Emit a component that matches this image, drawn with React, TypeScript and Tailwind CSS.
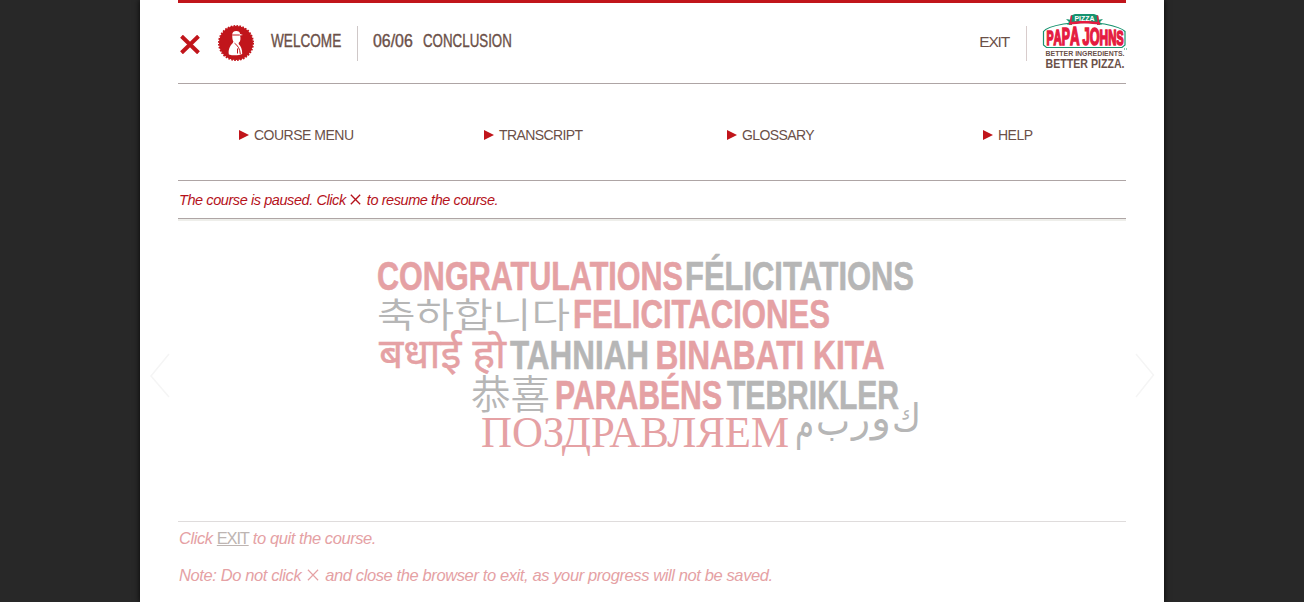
import type { ReactNode } from "react";

type Word = {
  text: string;
  x: number;
  y: number;
  width: number;
  size: number;
  fill: string;
  font: string;
  weight?: number;
  stroke?: number;
};

const PINK = "#e5a1a4";
const GREY = "#b6b6b6";
const SANS = "'Liberation Sans', sans-serif";

const words: Word[] = [
  { text: "CONGRATULATIONS", x: 377, y: 289.5, width: 306, size: 40.5, fill: PINK, font: SANS, weight: 700, stroke: 0.6 },
  { text: "FÉLICITATIONS", x: 685, y: 289.5, width: 229, size: 40.5, fill: GREY, font: SANS, weight: 700, stroke: 0.6 },
  { text: "축하합니다", x: 377, y: 328, width: 193, size: 35.5, fill: GREY, font: "'Noto Sans CJK KR', sans-serif", weight: 350 },
  { text: "FELICITACIONES", x: 573, y: 327.5, width: 257, size: 40.5, fill: PINK, font: SANS, weight: 700, stroke: 0.6 },
  { text: "बधाई हो", x: 379, y: 367.5, width: 127, size: 41, fill: PINK, font: "'Noto Sans', 'Noto Sans Devanagari', sans-serif", stroke: 0.4 },
  { text: "TAHNIAH", x: 510, y: 369, width: 139, size: 40.5, fill: GREY, font: SANS, weight: 700, stroke: 0.6 },
  { text: "BINABATI KITA", x: 655.5, y: 369, width: 229, size: 40.5, fill: PINK, font: SANS, weight: 700, stroke: 0.6 },
  { text: "恭喜", x: 471, y: 409, width: 79, size: 40, fill: GREY, font: "'Noto Sans CJK SC', sans-serif", weight: 350 },
  { text: "PARABÉNS", x: 555, y: 409, width: 167, size: 40.5, fill: PINK, font: SANS, weight: 700, stroke: 0.6 },
  { text: "TEBRIKLER", x: 727, y: 409, width: 172, size: 40.5, fill: GREY, font: SANS, weight: 700, stroke: 0.6 },
  { text: "ПОЗДРАВЛЯЕМ", x: 481, y: 447, width: 308, size: 43.5, fill: PINK, font: "'Liberation Serif', serif" },
];

const letters = [
  { text: "م", x: 795, y: 439, size: 46, width: 19 },
  { text: "ب", x: 816, y: 435, size: 40, width: 34 },
  { text: "ر", x: 852, y: 432, size: 38, width: 18 },
  { text: "و", x: 871, y: 431, size: 39, width: 20 },
  { text: "ك", x: 892, y: 431, size: 38, width: 29 },
];

function WordCloud() {
  return (
    <svg className="ml-[192px] mt-[26px] block h-[215px] w-[560px] shrink-0 overflow-visible" viewBox="370 245 560 215">
      {words.map((w) => (
        <text
          key={w.text}
          x={w.x}
          y={w.y}
          textLength={w.width}
          lengthAdjust="spacingAndGlyphs"
          fontSize={w.size}
          fontWeight={w.weight ?? 400}
          fontFamily={w.font}
          fill={w.fill}
          stroke={w.fill}
          strokeWidth={w.stroke ?? 0}
        >
          {w.text}
        </text>
      ))}
      {letters.map((l) => (
        <text
          key={l.text}
          x={l.x}
          y={l.y}
          textLength={l.width}
          lengthAdjust="spacingAndGlyphs"
          fontSize={l.size}
          fontFamily="'DejaVu Sans', sans-serif"
          fill={GREY}
        >
          {l.text}
        </text>
      ))}
    </svg>
  );
}

function Cross({ className, width }: { className: string; width: number }) {
  return (
    <svg className={className} viewBox="0 0 20 18" preserveAspectRatio="none" stroke="currentColor" strokeWidth={width} fill="none">
      <path d="M1.5 1.2 18.5 16.8M18.5 1.2 1.5 16.8" />
    </svg>
  );
}

function Badge() {
  return (
    <svg className="ml-[18px] size-9 shrink-0" viewBox="0 0 36 36">
      <circle cx="18" cy="18" r="17" fill="#c1151b" />
      <circle cx="18" cy="18" r="17.2" fill="none" stroke="#c1151b" strokeWidth="1.6" strokeDasharray="1.7 1.3" />
      <path
        d="M14.3 10C14 7.500 15.700 6 18.300 6c2.500 0 3.700 1.300 3.800 3l2.900.900-3 .500c.9 2.800.5 5.800-1.100 7.200l-.3 1.400c2.200 1.900 3.800 5.200 3.600 10-2.500 1.200-8.500 2-13.300.500-.9-3.500.600-8.800 3.900-11.500l.6-1.500c-1-1.400-1.200-4-1.100-6.500Z"
        fill="#fff"
      />
      <path d="M14.300 10h7.500M16.500 18.200c3.500 2.300 5.500 6 5.800 11M19.500 23.500v5" stroke="#c1151b" strokeWidth="1" fill="none" />
    </svg>
  );
}

function Logo() {
  return (
    <svg className="ml-[14px] mt-[11px] h-[56px] w-[86px] shrink-0 self-start overflow-visible" viewBox="1040 14 86 56">
      <path
        d="M1042.500 45V31.500c2-3 9-5.500 20-7.500 13-2 29-2 41 0 10 2 18 4.500 20.500 7.500V45l-3 2.500h-75.500z"
        fill="#fff"
        stroke="#17936f"
        strokeWidth="1.200"
      />
      <path d="m1065 19 6 1v5l-5-.500 2-2.500zM1102 19l-6 1v5l5-.500-2-2.500z" fill="#17936f" />
      <path d="m1070 15.500 4-1.500h19l4 1.500 1.500 8c-9-2-21-2-30 0z" fill="#17936f" />
      <path d="M1068 22.500c9-2 22-2 31 0v2.500c-9-2-22-2-31 0z" fill="#e51b40" />
      <path d="m1070.500 15.500-1 8M1096.500 15.500l1 8" stroke="#e51b40" strokeWidth="1.500" />
      <text x="1073.500" y="21" fontSize="6.800" fontFamily={SANS} fontWeight="700" textLength="20" lengthAdjust="spacingAndGlyphs" fill="#fff">
        PIZZA
      </text>
      <g fill="#e51b40" stroke="#e51b40" strokeWidth="1.700" fontFamily={SANS} fontWeight="700">
        <text x="1045.500" y="45.300" textLength="33" lengthAdjust="spacingAndGlyphs">
          <tspan fontSize="20">P</tspan>
          <tspan fontSize="21.500">A</tspan>
          <tspan fontSize="23">P</tspan>
          <tspan fontSize="25">A</tspan>
        </text>
        <text x="1081.500" y="45.300" textLength="41" lengthAdjust="spacingAndGlyphs">
          <tspan fontSize="24.500">J</tspan>
          <tspan fontSize="24">O</tspan>
          <tspan fontSize="22.500">H</tspan>
          <tspan fontSize="21.500">N</tspan>
          <tspan fontSize="20">S</tspan>
        </text>
      </g>
      <g fill="#6a5048" fontFamily={SANS} fontWeight="700">
        <text x="1044.500" y="55.800" fontSize="7.200" textLength="79" lengthAdjust="spacingAndGlyphs">BETTER INGREDIENTS.</text>
        <text x="1044.500" y="68" fontSize="12" textLength="79" lengthAdjust="spacingAndGlyphs">BETTER PIZZA.</text>
      </g>
      <path d="M1123 49h1M1125 49h1" stroke="#17936f" />
    </svg>
  );
}

function Condensed({ children, box, scale }: { children: ReactNode; box: string; scale: string }) {
  return (
    <span className={`mb-[5px] flex shrink-0 ${box}`}>
      <span className={`origin-left whitespace-nowrap text-[18.5px] text-[#6b5048] [-webkit-text-stroke:0.4px_#6b5048] ${scale}`}>{children}</span>
    </span>
  );
}

function MenuItem({ children, className }: { children: ReactNode; className: string }) {
  return (
    <a className={`flex items-center gap-[5px] whitespace-nowrap text-[14px] leading-4 text-[#6b5048] ${className}`}>
      <svg className="h-[10px] w-[10px]" viewBox="0 0 10 10">
        <path d="M0 0 10 5 0 10z" fill="#c1151b" />
      </svg>
      {children}
    </a>
  );
}

function Chevron({ flip, className }: { flip?: boolean; className: string }) {
  return (
    <svg className={`absolute top-[353px] h-[46px] w-5 ${className}`} viewBox="0 0 20 46" fill="none" stroke="#f5f5f5" strokeWidth="1.5">
      <path d={flip ? "M1 1 18.500 22 1 44" : "M19 1 1 23 19 44"} />
    </svg>
  );
}

export default function App() {
  return (
    <div className="flex h-[602px] w-[1304px] justify-center overflow-hidden bg-[#282828] font-['Liberation_Sans',sans-serif]">
      <main className="relative flex w-[1024px] flex-col bg-white px-[38px] shadow-[0_0_6px_rgba(0,0,0,0.9)]">
        <header className="flex h-[84px] shrink-0 items-center border-t-[3px] border-b border-t-[#c1151b] border-b-[#aea5a5]">
          <Cross className="ml-[2px] mt-[2px] h-[19px] w-5 text-[#c1151b]" width={4} />
          <Badge />
          <Condensed box="ml-[17px] w-[70px]" scale="scale-x-[0.735]">WELCOME</Condensed>
          <span className="ml-4 h-[35px] w-px shrink-0 bg-[#cfc8c8]" />
          <Condensed box="ml-[15px] w-[40px]" scale="scale-x-[0.86]">06/06</Condensed>
          <Condensed box="ml-[10px] w-[89px]" scale="scale-x-[0.72]">CONCLUSION</Condensed>
          <span className="ml-auto mb-[2px] text-[15.5px] tracking-[-1.2px] text-[#6b5048]">EXIT</span>
          <span className="ml-[17px] h-[35px] w-px shrink-0 bg-[#d8cccc]" />
          <Logo />
          <span className="-ml-px" />
        </header>

        <nav className="flex h-[97px] shrink-0 items-center border-b border-[#aea5a5] pt-[5px]">
          <MenuItem className="ml-[61px] w-[245px] tracking-[-0.5px]">COURSE MENU</MenuItem>
          <MenuItem className="w-[243px] tracking-[-0.6px]">TRANSCRIPT</MenuItem>
          <MenuItem className="w-[256px] tracking-[-0.6px]">GLOSSARY</MenuItem>
          <MenuItem className="tracking-[-0.5px]">HELP</MenuItem>
        </nav>

        <p className="flex h-[38px] shrink-0 items-center whitespace-nowrap border-b border-[#aea5a5] pl-px pt-[2px] text-[14.5px] italic tracking-[-0.42px] text-[#b5121b] shadow-[0_2px_0_#eeeeea]">
          The course is paused. Click
          <Cross className="ml-1 mr-[6px] mb-[2px] size-[11px]" width={2.5} />
          to resume the course.
        </p>

        <WordCloud />

        <footer className="mt-[61px] border-t border-[#dfdcdc] pl-px pt-[5px] text-[16.5px] italic leading-[22px] tracking-[-0.39px] text-[#e5a1a4]">
          <p className="whitespace-nowrap tracking-[-0.42px]">
            Click <a className="not-italic tracking-[-1.2px] text-[#bdb5b2] underline">EXIT</a> to quit the course.
          </p>
          <p className="mt-[15px] flex items-center whitespace-nowrap">
            Note: Do not click
            <Cross className="mx-[6px] mb-px size-3" width={2} />
            and close the browser to exit, as your progress will not be saved.
          </p>
        </footer>

        <Chevron className="left-[10px]" />
        <Chevron flip className="right-[9px]" />
      </main>
    </div>
  );
}
